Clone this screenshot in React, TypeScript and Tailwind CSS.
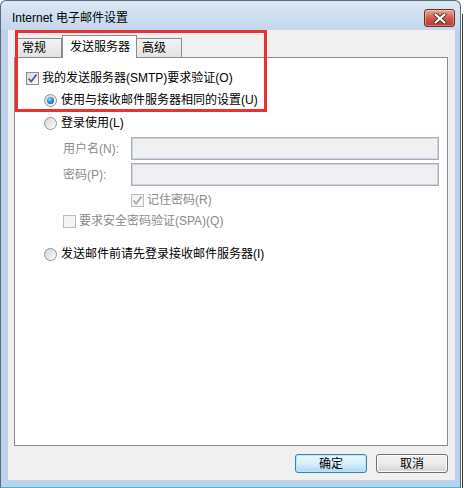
import React from "react";

const FONT = { fontFamily: '"Liberation Sans", "Noto Sans CJK SC", sans-serif' };

function CheckBox({ checked = false, disabled = false }: { checked?: boolean; disabled?: boolean }) {
  return (
    <span
      className={`flex h-[13px] w-[13px] shrink-0 items-center justify-center border ${
        disabled ? "border-[#bcbcbc] bg-[#f4f4f4]" : "border-[#8e8f8f] bg-gradient-to-br from-[#dcdcdc] to-[#fbfbfb]"
      }`}
    >
      {checked && (
        <svg width="11" height="11" viewBox="0 0 11 11">
          <path
            d="M1.5 5.5 L4.2 8.6 L9.5 1.5"
            fill="none"
            stroke={disabled ? "#a8a8a8" : "#4a5f97"}
            strokeWidth="1.8"
          />
        </svg>
      )}
    </span>
  );
}

function Radio({ checked = false }: { checked?: boolean }) {
  return (
    <span className="flex h-[13px] w-[13px] shrink-0 items-center justify-center rounded-full border border-[#8e8f8f] bg-gradient-to-br from-[#d6d6d6] to-[#fcfcfc]">
      {checked && (
        <span className="h-[7px] w-[7px] rounded-full bg-[radial-gradient(circle_at_40%_35%,#9fdcff_0%,#2b8be0_45%,#0c3f8f_100%)]" />
      )}
    </span>
  );
}

function Input() {
  return (
    <div className="h-[23px] flex-1 border border-[#abadb3] bg-[#f0f0f0] shadow-[inset_0_0_0_1px_#c5d6ec]" />
  );
}

export default function App() {
  return (
    <div className="relative flex h-[488px] w-[464px] bg-white text-[12px] leading-[16px] text-black" style={FONT}>
      {/* window */}
      <div className="flex h-[488px] w-[461px] flex-col rounded-t-[6px] border border-[#5b6b7c] border-b-[#3bbcd4] bg-[#bcd2ea]">
        {/* title bar */}
        <div className="flex h-[29px] items-start justify-between rounded-t-[6px] bg-gradient-to-b from-[#dbe7f4] to-[#c3d7ed] pl-[11px] pr-[5px]">
          <span className="mt-[9px] text-[12px] leading-[16px]">Internet 电子邮件设置</span>
          <div className="mt-[8px] flex h-[18px] w-[31px] items-center justify-center rounded-[3px] border border-[#6b2a22] bg-gradient-to-b from-[#e9a99b] via-[#cf5a4c] to-[#b8382d] shadow-[inset_0_0_0_1px_rgba(255,255,255,0.35)]">
            <svg width="14" height="11" viewBox="0 0 14 11">
              <path d="M2.5 1.5 L11.5 9.5 M11.5 1.5 L2.5 9.5" stroke="#5a2a24" strokeWidth="4" strokeLinecap="round" />
              <path d="M2.5 1.5 L11.5 9.5 M11.5 1.5 L2.5 9.5" stroke="#ffffff" strokeWidth="2.2" strokeLinecap="round" />
            </svg>
          </div>
        </div>

        {/* client area */}
        <div className="ml-[7px] mr-[5px] flex h-[450px] flex-col bg-[#f0f0f0] pl-[6px] pr-[7px] pt-[5px]">
          {/* tabs */}
          <div className="flex h-[22px] items-end pl-[2px]">
            <div className="flex h-[19px] w-[46px] items-center border border-b-0 border-[#898c95] bg-gradient-to-b from-[#f2f2f2] to-[#e3e3e3] pl-[5px]">
              常规
            </div>
            <div className="relative z-10 -mb-px flex h-[23px] w-[75px] items-center border border-b-0 border-[#898c95] bg-white pb-[1px] pl-[7px]">
              发送服务器
            </div>
            <div className="flex h-[19px] w-[45px] items-center border border-b-0 border-l-0 border-[#898c95] bg-gradient-to-b from-[#f2f2f2] to-[#e3e3e3] pl-[5px]">
              高级
            </div>
          </div>

          {/* panel */}
          <div className="flex h-[389px] flex-col border border-[#898c95] bg-white pl-[11px] pr-[8px]">
            <div className="mt-[12px] flex h-[16px] items-center gap-[3px]">
              <CheckBox checked />
              <span>我的发送服务器(SMTP)要求验证(O)</span>
            </div>
            <div className="ml-[18px] mt-[6px] flex h-[16px] items-center gap-[4px]">
              <Radio checked />
              <span>使用与接收邮件服务器相同的设置(U)</span>
            </div>
            <div className="ml-[18px] mt-[7px] flex h-[16px] items-center gap-[4px]">
              <Radio />
              <span>登录使用(L)</span>
            </div>
            <div className="ml-[37px] mt-[6px] flex items-center">
              <span className="w-[68px] text-[#8a8a8a]">用户名(N):</span>
              <Input />
            </div>
            <div className="ml-[37px] mt-[3px] flex items-center">
              <span className="w-[68px] text-[#8a8a8a]">密码(P):</span>
              <Input />
            </div>
            <div className="ml-[105px] mt-[6px] flex h-[16px] items-center gap-[3px]">
              <CheckBox checked disabled />
              <span className="text-[#8a8a8a]">记住密码(R)</span>
            </div>
            <div className="ml-[37px] mt-[5px] flex h-[16px] items-center gap-[3px]">
              <CheckBox disabled />
              <span className="text-[#8a8a8a]">要求安全密码验证(SPA)(Q)</span>
            </div>
            <div className="ml-[18px] mt-[17px] flex h-[16px] items-center gap-[4px]">
              <Radio />
              <span>发送邮件前请先登录接收邮件服务器(I)</span>
            </div>
          </div>

          {/* buttons */}
          <div className="mt-[8px] flex justify-end gap-[9px]">
            <button className="flex h-[19px] w-[72px] items-center justify-center rounded-[3px] border border-[#3c7fb1] bg-gradient-to-b from-[#eaf6fd] via-[#d9f0fc] to-[#a7d9f5] text-[12px] shadow-[inset_0_0_0_1px_#bfe4f8]">
              确定
            </button>
            <button className="flex h-[19px] w-[72px] items-center justify-center rounded-[3px] border border-[#707070] bg-gradient-to-b from-[#f2f2f2] via-[#ebebeb] to-[#d2d2d2] text-[12px] shadow-[inset_0_0_0_1px_#fcfcfc]">
              取消
            </button>
          </div>
        </div>
      </div>

      {/* right edge of the desktop behind */}
      <div className="ml-[1px] mt-[14px] h-[474px] w-[1px] bg-[#3a3a3a]" />

      {/* red annotation box */}
      <div className="pointer-events-none absolute left-[15px] top-[30px] h-[82px] w-[252px] border-[3px] border-[#ec2f2f]" />
    </div>
  );
}
